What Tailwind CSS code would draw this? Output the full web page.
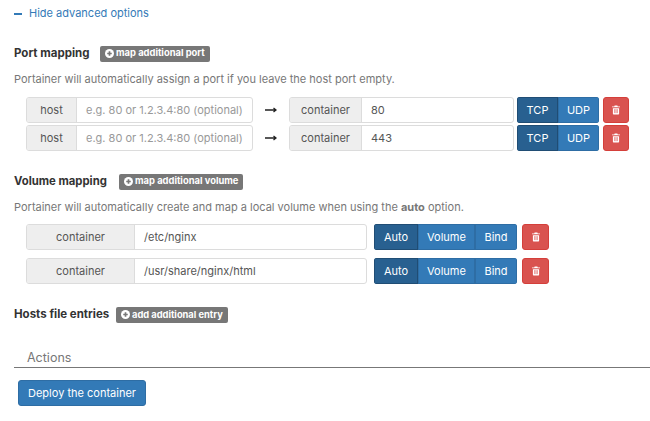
<!DOCTYPE html>
<html lang="en">
<head>
    <meta charset="UTF-8">
    <title>Portainer - advanced options</title>
    <script src="https://cdn.jsdelivr.net/npm/@tailwindcss/browser@4"></script>
</head>
<body class="bg-white font-['Inter',sans-serif] text-[11px] text-[#555] overflow-hidden">
    <main class="w-[650px] h-[421px] overflow-hidden pl-[14px] pt-[6px]">
        <!-- toggle -->
        <div class="flex items-center h-[15px] text-[#337ab7]">
            <span class="w-[8px] h-[2px] bg-[#337ab7] mr-[7px]"></span>
            <span class="text-[11px]">Hide advanced options</span>
        </div>

        <!-- port mapping -->
        <div class="flex items-center mt-[24px] h-[17px]">
            <span class="font-bold text-[#333] text-[11.5px] w-[86px]">Port mapping</span>
            <span class="flex items-center h-[16px] px-[5px] rounded-[2px] bg-[#777] text-white text-[9.4px] font-bold">
                <svg class="w-[9px] h-[9px] mr-[2px]" viewBox="0 0 16 16"><circle cx="8" cy="8" r="8" fill="#fff"/><path d="M8 4v8M4 8h8" stroke="#777" stroke-width="3"/></svg>
                map additional port
            </span>
        </div>
        <p class="mt-[10px] h-[14px] leading-[14px] text-[#777] text-[11px]">Portainer will automatically assign a port if you leave the host port empty.</p>

        <div class="mt-[11px] ml-[12px] flex flex-col gap-[2px]">
            <div class="flex items-center h-[26px]">
                <div class="flex h-full w-[227px] border border-[#dcdcdc] rounded-[3px] overflow-hidden">
                    <span class="w-[50px] bg-[#eee] border-r border-[#dcdcdc] flex items-center justify-center">host</span>
                    <span class="flex-1 flex items-center pl-[9px] text-[#999]">e.g. 80 or 1.2.3.4:80 (optional)</span>
                </div>
                <span class="w-[36px] flex justify-center">
                    <svg class="w-[12px] h-[8px]" viewBox="0 0 12 8"><path d="M0 4h11M8.500 2 11 4 8.500 6" fill="none" stroke="#222" stroke-width="1.300"/></svg>
                </span>
                <div class="flex h-full w-[225px] border border-[#dcdcdc] rounded-[3px] overflow-hidden">
                    <span class="w-[72px] bg-[#eee] border-r border-[#dcdcdc] flex items-center justify-center">container</span>
                    <span class="flex-1 flex items-center pl-[9px]">80</span>
                </div>
                <div class="flex h-full ml-[3px] w-[82px] rounded-[3px] overflow-hidden text-white">
                    <span class="w-[41px] bg-[#286090] border border-[#204d74] flex items-center justify-center">TCP</span>
                    <span class="w-[41px] bg-[#337ab7] border border-[#2e6da4] flex items-center justify-center">UDP</span>
                </div>
                <span class="ml-[4px] w-[26px] h-full bg-[#d9534f] border border-[#d43f3a] rounded-[3px] flex items-center justify-center">
                    <svg class="w-[8px] h-[10px]" viewBox="0 0 9 10"><path d="M3 0h3l.5 1H9v1H0V1h2.500zM1 3h7v6.200q0 .8-.8.8H1.800Q1 10 1 9.200z" fill="#fff"/><path d="M3 4v4.500M4.500 4v4.500M6 4v4.500" stroke="#d9534f" stroke-width=".7"/></svg>
                </span>
            </div>
            <div class="flex items-center h-[26px]">
                <div class="flex h-full w-[227px] border border-[#dcdcdc] rounded-[3px] overflow-hidden">
                    <span class="w-[50px] bg-[#eee] border-r border-[#dcdcdc] flex items-center justify-center">host</span>
                    <span class="flex-1 flex items-center pl-[9px] text-[#999]">e.g. 80 or 1.2.3.4:80 (optional)</span>
                </div>
                <span class="w-[36px] flex justify-center">
                    <svg class="w-[12px] h-[8px]" viewBox="0 0 12 8"><path d="M0 4h11M8.500 2 11 4 8.500 6" fill="none" stroke="#222" stroke-width="1.300"/></svg>
                </span>
                <div class="flex h-full w-[225px] border border-[#dcdcdc] rounded-[3px] overflow-hidden">
                    <span class="w-[72px] bg-[#eee] border-r border-[#dcdcdc] flex items-center justify-center">container</span>
                    <span class="flex-1 flex items-center pl-[9px]">443</span>
                </div>
                <div class="flex h-full ml-[3px] w-[82px] rounded-[3px] overflow-hidden text-white">
                    <span class="w-[41px] bg-[#286090] border border-[#204d74] flex items-center justify-center">TCP</span>
                    <span class="w-[41px] bg-[#337ab7] border border-[#2e6da4] flex items-center justify-center">UDP</span>
                </div>
                <span class="ml-[4px] w-[26px] h-full bg-[#d9534f] border border-[#d43f3a] rounded-[3px] flex items-center justify-center">
                    <svg class="w-[8px] h-[10px]" viewBox="0 0 9 10"><path d="M3 0h3l.5 1H9v1H0V1h2.500zM1 3h7v6.200q0 .8-.8.8H1.800Q1 10 1 9.200z" fill="#fff"/><path d="M3 4v4.500M4.500 4v4.500M6 4v4.500" stroke="#d9534f" stroke-width=".7"/></svg>
                </span>
            </div>
        </div>

        <!-- volume mapping -->
        <div class="flex items-center mt-[22px] h-[17px]">
            <span class="font-bold text-[#333] text-[11.3px] w-[105px]">Volume mapping</span>
            <span class="flex items-center h-[16px] px-[5px] rounded-[2px] bg-[#777] text-white text-[9.4px] font-bold">
                <svg class="w-[9px] h-[9px] mr-[2px]" viewBox="0 0 16 16"><circle cx="8" cy="8" r="8" fill="#fff"/><path d="M8 4v8M4 8h8" stroke="#777" stroke-width="3"/></svg>
                map additional volume
            </span>
        </div>
        <p class="mt-[10px] h-[14px] leading-[14px] text-[#777] text-[11px]">Portainer will automatically create and map a local volume when using the <b>auto</b> option.</p>

        <div class="mt-[10px] ml-[12px] flex flex-col gap-[8px]">
            <div class="flex items-center h-[26px]">
                <div class="flex h-full w-[341px] border border-[#dcdcdc] rounded-[3px] overflow-hidden">
                    <span class="w-[108px] bg-[#eee] border-r border-[#dcdcdc] flex items-center justify-center">container</span>
                    <span class="flex-1 flex items-center pl-[9px]">/etc/nginx</span>
                </div>
                <div class="flex h-full ml-[7px] w-[143px] rounded-[3px] overflow-hidden text-white">
                    <span class="w-[44px] bg-[#286090] border border-[#204d74] flex items-center justify-center">Auto</span>
                    <span class="w-[57px] bg-[#337ab7] border border-[#2e6da4] flex items-center justify-center">Volume</span>
                    <span class="w-[42px] bg-[#337ab7] border border-[#2e6da4] flex items-center justify-center">Bind</span>
                </div>
                <span class="ml-[5px] w-[27px] h-full bg-[#d9534f] border border-[#d43f3a] rounded-[3px] flex items-center justify-center">
                    <svg class="w-[8px] h-[10px]" viewBox="0 0 9 10"><path d="M3 0h3l.5 1H9v1H0V1h2.500zM1 3h7v6.200q0 .8-.8.8H1.800Q1 10 1 9.200z" fill="#fff"/><path d="M3 4v4.500M4.500 4v4.500M6 4v4.500" stroke="#d9534f" stroke-width=".7"/></svg>
                </span>
            </div>
            <div class="flex items-center h-[26px]">
                <div class="flex h-full w-[341px] border border-[#dcdcdc] rounded-[3px] overflow-hidden">
                    <span class="w-[108px] bg-[#eee] border-r border-[#dcdcdc] flex items-center justify-center">container</span>
                    <span class="flex-1 flex items-center pl-[9px]">/usr/share/nginx/html</span>
                </div>
                <div class="flex h-full ml-[7px] w-[143px] rounded-[3px] overflow-hidden text-white">
                    <span class="w-[44px] bg-[#286090] border border-[#204d74] flex items-center justify-center">Auto</span>
                    <span class="w-[57px] bg-[#337ab7] border border-[#2e6da4] flex items-center justify-center">Volume</span>
                    <span class="w-[42px] bg-[#337ab7] border border-[#2e6da4] flex items-center justify-center">Bind</span>
                </div>
                <span class="ml-[5px] w-[27px] h-full bg-[#d9534f] border border-[#d43f3a] rounded-[3px] flex items-center justify-center">
                    <svg class="w-[8px] h-[10px]" viewBox="0 0 9 10"><path d="M3 0h3l.5 1H9v1H0V1h2.500zM1 3h7v6.200q0 .8-.8.8H1.800Q1 10 1 9.200z" fill="#fff"/><path d="M3 4v4.500M4.500 4v4.500M6 4v4.500" stroke="#d9534f" stroke-width=".7"/></svg>
                </span>
            </div>
        </div>

        <!-- hosts file -->
        <div class="flex items-center mt-[22px] h-[17px]">
            <span class="font-bold text-[#333] text-[11.5px] w-[102px]">Hosts file entries</span>
            <span class="flex items-center h-[16px] px-[5px] rounded-[2px] bg-[#777] text-white text-[9.3px] font-bold">
                <svg class="w-[9px] h-[9px] mr-[2px]" viewBox="0 0 16 16"><circle cx="8" cy="8" r="8" fill="#fff"/><path d="M8 4v8M4 8h8" stroke="#777" stroke-width="3"/></svg>
                add additional entry
            </span>
        </div>

        <!-- actions -->
        <div class="mt-[26px] w-[636px] h-[19px] pl-[13px] border-b border-[#777] text-[#777] text-[12.5px] leading-[17px]">Actions</div>
        <button class="mt-[12px] ml-[4px] h-[26px] w-[128px] bg-[#337ab7] border border-[#2e6da4] rounded-[3px] text-white text-[11px] flex items-center justify-center">Deploy the container</button>
    </main>
</body>
</html>
